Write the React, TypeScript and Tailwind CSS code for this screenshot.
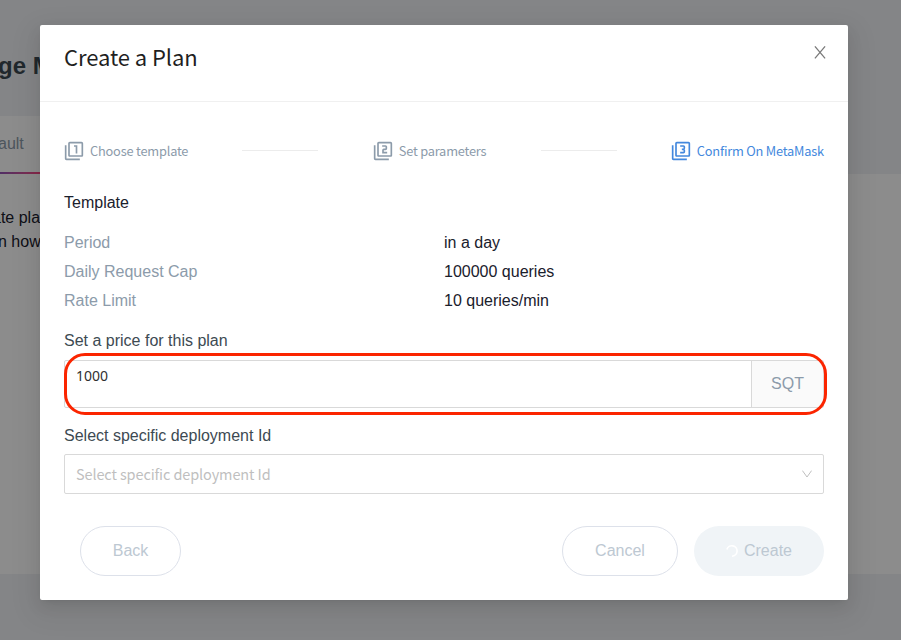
import type { ReactNode } from 'react';
import { MdOutlineFilter1, MdOutlineFilter2, MdOutlineFilter3 } from 'react-icons/md';

const details = [
  { label: 'Period', value: 'in a day' },
  { label: 'Daily Request Cap', value: '100000 queries' },
  { label: 'Rate Limit', value: '10 queries/min' },
];

function Step({ icon, title, active = false }: { icon: ReactNode; title: string; active?: boolean }) {
  return (
    <div className={`flex items-center gap-1.5 ${active ? 'text-[#4388dd]' : 'text-[#8c9baa]'}`}>
      <span className="text-[20px]">{icon}</span>
      <span className="font-['Noto_Sans_CJK_SC',sans-serif] text-[12.8px] leading-5 tracking-[-0.2px] whitespace-nowrap">{title}</span>
    </div>
  );
}

function Page() {
  return (
    <div className="flex h-[640px] w-[901px] flex-col overflow-hidden bg-white whitespace-nowrap">
      <header className="h-[116px] shrink-0 bg-[#f1f3f6] pt-[50px]">
        <h1 className="-ml-[2px] text-[24px] leading-8 font-bold text-[#3d4a52]">ge M</h1>
      </header>
      <div className="flex h-[58px] shrink-0">
        <div className="flex w-[60px] flex-col justify-between">
          <span className="-ml-[2px] pt-4 text-base text-[#8c9baa]">ault</span>
          <span className="h-0.5 bg-linear-to-r from-[#9354b8] to-[#ff4581] to-70%" />
        </div>
        <div className="ml-auto w-[60px] bg-[#f1f3f6]" />
      </div>
      <main className="flex-1 pt-8 text-base leading-6 text-[#1a202c]">
        <p className="-ml-[8px]">ate pla</p>
        <p className="-ml-[2px]">n how</p>
      </main>
      <footer className="h-[66px] shrink-0 bg-[#f1f3f6]" />
    </div>
  );
}

export default function App() {
  return (
    <div className="relative h-[640px] w-[901px] overflow-hidden font-['Liberation_Sans',Arial,sans-serif]">
      <Page />
      <div className="absolute inset-0 flex items-start bg-black/45 pt-[25px] pl-10">
        <section
          role="dialog"
          className="flex h-[575px] w-[808px] flex-col rounded-[2px] bg-white shadow-[0_3px_6px_-4px_rgba(0,0,0,0.12),0_6px_16px_0_rgba(0,0,0,0.08),0_9px_28px_8px_rgba(0,0,0,0.05)]"
        >
          <header className="flex h-[77px] shrink-0 justify-between border-b border-[#f0f0f0] px-6">
            <h2 className="pt-[15px] font-['Noto_Sans_CJK_SC',sans-serif] text-[22px] leading-8 font-normal tracking-[-0.08px] text-[#1f1f1f]">
              Create a Plan
            </h2>
            <svg viewBox="0 0 12 13" className="mt-[20.5px] mr-[-2px] h-[13px] w-3 text-[#7a7a7a]" fill="none" stroke="currentColor" strokeWidth="1.3">
              <path d="M.9.4 11.1 12.4M11.1.4.9 12.4" />
            </svg>
          </header>

          <div className="flex flex-col px-6 pt-[38px]">
            <div className="flex h-[22px] items-center justify-between">
              <Step icon={<MdOutlineFilter1 />} title="Choose template" />
              <span className="-mt-px h-px w-[76px] bg-[#ececec]" />
              <Step icon={<MdOutlineFilter2 />} title="Set parameters" />
              <span className="-mt-px h-px w-[76px] bg-[#ececec]" />
              <Step icon={<MdOutlineFilter3 />} title="Confirm On MetaMask" active />
            </div>

            <h3 className="mt-[29px] text-base leading-6 text-[#1a202c]">Template</h3>
            <dl className="mt-[13px] flex flex-col text-base">
              {details.map((item) => (
                <div key={item.label} className="grid h-[29px] grid-cols-2 items-center">
                  <dt className="text-[#8c9baa]">{item.label}</dt>
                  <dd className="text-[#1a202c]">{item.value}</dd>
                </div>
              ))}
            </dl>

            <p className="mt-[14px] text-base leading-6 text-[#3d4a52]">Set a price for this plan</p>
            <div className="relative mt-[7px] flex h-12 rounded-[2px] border border-[#d9d9d9]">
              <div className="flex-1 px-[11px] pt-1 font-['Noto_Sans',sans-serif] text-sm leading-[22px] text-[#303030]">
                1000
              </div>
              <div className="flex w-[72px] items-center justify-center border-l border-[#d9d9d9] bg-[#fafafa] text-base text-[#8c9baa]">
                SQT
              </div>
              <div className="absolute -top-[8.5px] -right-[4px] -bottom-[8px] -left-[1px] rounded-[21px] border-[3px] border-[#fb2500]" />
            </div>

            <p className="mt-4 text-base leading-6 text-[#3d4a52]">Select specific deployment Id</p>
            <div className="mt-[6px] flex h-10 items-center justify-between rounded-[2px] border border-[#d9d9d9] px-[11px]">
              <span className="font-['Noto_Sans_CJK_SC',sans-serif] text-[14.5px] leading-6 tracking-[-0.12px] text-[#bfbfbf]">
                Select specific deployment Id
              </span>
              <svg viewBox="0 0 10 8" className="h-2 w-2.5 text-[#bfbfbf]" fill="none" stroke="currentColor">
                <path d="M.4.6 5 7 9.6.6" />
              </svg>
            </div>

            <div className="mt-8 flex h-[50px] items-stretch gap-4 text-base text-[#bdc8d2]">
              <button className="ml-4 w-[101px] rounded-full border border-[#dde1ea]">Back</button>
              <button className="ml-auto w-[116px] rounded-full border border-[#dde1ea]">Cancel</button>
              <button className="flex w-[130px] items-center justify-center gap-1.5 rounded-full bg-[#f0f4f7]">
                <svg viewBox="0 0 12 12" className="size-3 text-white" fill="none" stroke="currentColor" strokeWidth="1.6">
                  <path d="M.9 4.5A5.2 5.2 0 1 1 6 11.2" />
                </svg>
                Create
              </button>
            </div>
          </div>
        </section>
      </div>
    </div>
  );
}
